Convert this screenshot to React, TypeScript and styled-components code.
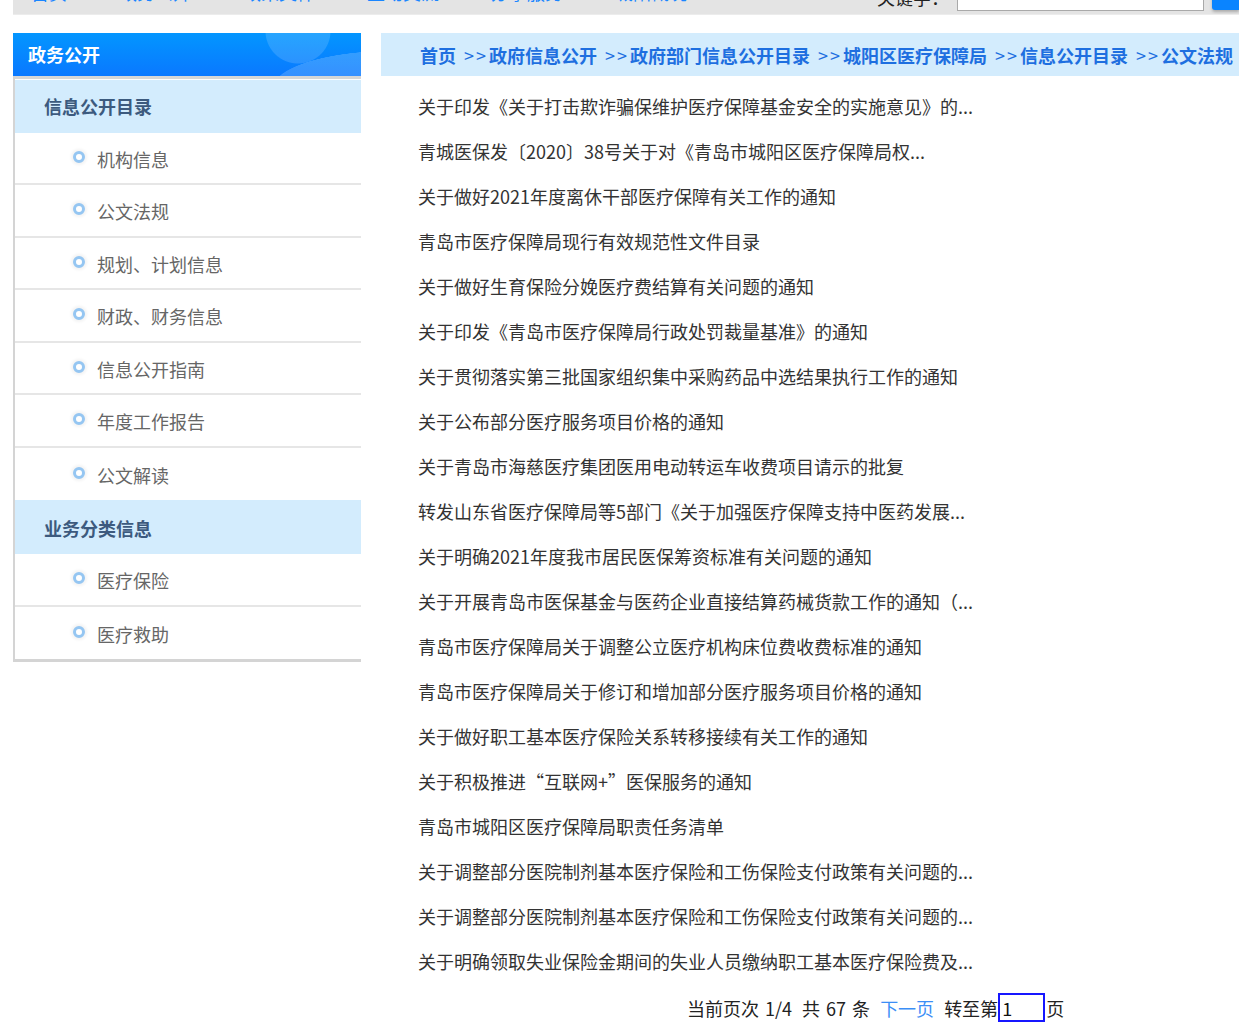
import styled, { createGlobalStyle } from "styled-components";

const GlobalStyle = createGlobalStyle`
  html, body {
    margin: 0;
    padding: 0;
    background: #fff;
  }
  body {
    font-family: "Noto Sans CJK SC", "Noto Sans", sans-serif;
    overflow: hidden;
  }
  * {
    box-sizing: border-box;
  }
`;

const topLinks = ["首页", "政务公开", "政策文件", "互动交流", "办事服务", "城阳概况"];

const menuGroups = [
  {
    title: "信息公开目录",
    items: [
      "机构信息",
      "公文法规",
      "规划、计划信息",
      "财政、财务信息",
      "信息公开指南",
      "年度工作报告",
      "公文解读",
    ],
  },
  {
    title: "业务分类信息",
    items: ["医疗保险", "医疗救助"],
  },
];

const crumbs = [
  "首页",
  "政府信息公开",
  "政府部门信息公开目录",
  "城阳区医疗保障局",
  "信息公开目录",
  "公文法规",
];

const articles = [
  "关于印发《关于打击欺诈骗保维护医疗保障基金安全的实施意见》的...",
  "青城医保发〔2020〕38号关于对《青岛市城阳区医疗保障局权...",
  "关于做好2021年度离休干部医疗保障有关工作的通知",
  "青岛市医疗保障局现行有效规范性文件目录",
  "关于做好生育保险分娩医疗费结算有关问题的通知",
  "关于印发《青岛市医疗保障局行政处罚裁量基准》的通知",
  "关于贯彻落实第三批国家组织集中采购药品中选结果执行工作的通知",
  "关于公布部分医疗服务项目价格的通知",
  "关于青岛市海慈医疗集团医用电动转运车收费项目请示的批复",
  "转发山东省医疗保障局等5部门《关于加强医疗保障支持中医药发展...",
  "关于明确2021年度我市居民医保筹资标准有关问题的通知",
  "关于开展青岛市医保基金与医药企业直接结算药械货款工作的通知（...",
  "青岛市医疗保障局关于调整公立医疗机构床位费收费标准的通知",
  "青岛市医疗保障局关于修订和增加部分医疗服务项目价格的通知",
  "关于做好职工基本医疗保险关系转移接续有关工作的通知",
  "关于积极推进“互联网+”医保服务的通知",
  "青岛市城阳区医疗保障局职责任务清单",
  "关于调整部分医院制剂基本医疗保险和工伤保险支付政策有关问题的...",
  "关于调整部分医院制剂基本医疗保险和工伤保险支付政策有关问题的...",
  "关于明确领取失业保险金期间的失业人员缴纳职工基本医疗保险费及...",
];

export default function App() {
  return (
    <>
      <GlobalStyle />
      <StyledTopBar>
        <StyledTopLinks>
          {topLinks.map((txt) => (
            <StyledTopLink key={txt}>{txt}</StyledTopLink>
          ))}
        </StyledTopLinks>
        <StyledSearch>
          <StyledSearchLabel>关键字：</StyledSearchLabel>
          <StyledSearchInput />
          <StyledSearchBtn />
        </StyledSearch>
      </StyledTopBar>

      <StyledMain>
        <StyledSide>
          <StyledSideTitle>政务公开</StyledSideTitle>
          <StyledMenuBox>
            {menuGroups.map((group, gi) => (
              <div key={group.title}>
                <StyledGroupTitle tall={gi > 0}>{group.title}</StyledGroupTitle>
                {group.items.map((item) => (
                  <StyledMenuItem key={item}>
                    <StyledDot />
                    <StyledMenuTxt>{item}</StyledMenuTxt>
                  </StyledMenuItem>
                ))}
              </div>
            ))}
          </StyledMenuBox>
        </StyledSide>

        <StyledContent>
          <StyledCrumbBar>
            {crumbs.map((c, i) => (
              <StyledCrumb key={c}>
                {i > 0 && <StyledCrumbSep>&gt;&gt;</StyledCrumbSep>}
                {c}
              </StyledCrumb>
            ))}
          </StyledCrumbBar>
          <StyledList>
            {articles.map((a, i) => (
              <StyledListItem key={i}>{a}</StyledListItem>
            ))}
          </StyledList>
          <StyledPager>
            <StyledPagerPart>当前页次 1/4</StyledPagerPart>
            <StyledPagerPart>共 67 条</StyledPagerPart>
            <StyledNextLink>下一页</StyledNextLink>
            <StyledGoto>
              转至第<StyledPageInput defaultValue="1" />页
            </StyledGoto>
          </StyledPager>
        </StyledContent>
      </StyledMain>
    </>
  );
}

const StyledTopBar = styled.header`
  margin-left: 13px;
  height: 15px;
  background: #e4e4e4;
  border-bottom: 1px solid #ececec;
  display: flex;
  align-items: flex-start;
  justify-content: space-between;
  overflow: hidden;
`;

const StyledTopLinks = styled.nav`
  display: flex;
  gap: 52px;
  padding-left: 18px;
  margin-top: -20px;
`;

const StyledTopLink = styled.span`
  font-size: 18px;
  line-height: 24px;
  color: #1a86ff;
`;

const StyledSearch = styled.div`
  display: flex;
  align-items: flex-end;
  margin-top: -20px;
`;

const StyledSearchLabel = styled.span`
  font-size: 18px;
  line-height: 28px;
  color: #222;
  margin-right: 8px;
`;

const StyledSearchInput = styled.div`
  width: 247px;
  height: 30px;
  background: #fff;
  border: 1px solid #a9a9a9;
`;

const StyledSearchBtn = styled.div`
  width: 27px;
  height: 30px;
  margin-left: 8px;
  margin-bottom: 1px;
  background: #0a84ff;
  border-radius: 3px 0 0 3px;
  box-shadow: 0 2px 3px rgba(0, 0, 0, 0.25);
`;

const StyledMain = styled.div`
  display: flex;
  gap: 20px;
  margin-top: 18px;
  padding-left: 13px;
`;

const StyledSide = styled.aside`
  width: 348px;
  flex-shrink: 0;
`;

const StyledSideTitle = styled.h2`
  margin: 0;
  height: 43px;
  padding-left: 15px;
  font-size: 18px;
  font-weight: 700;
  line-height: 43px;
  color: #fff;
  background:
    radial-gradient(circle at 285px -2px, rgba(255, 255, 255, 0.14) 0 32px, transparent 33px),
    radial-gradient(ellipse 120px 38px at 380px 56px, rgba(255, 255, 255, 0.18) 0 100%, transparent 101%),
    linear-gradient(180deg, #0396ff 0%, #0a78ff 100%);
`;

const StyledMenuBox = styled.div`
  border-top: 3px solid #d6d6d6;
  border-left: 2px solid #d4d4d4;
  border-bottom: 3px solid #d4d4d4;
  padding-top: 1px;
`;

const StyledGroupTitle = styled.h3<{ tall: boolean }>`
  margin: 0;
  height: ${({ tall }) => (tall ? "54.5px" : "52.5px")};
  padding-left: 29px;
  font-size: 18px;
  font-weight: 700;
  line-height: ${({ tall }) => (tall ? "56px" : "53px")};
  color: #3c5a7e;
  background: #d3ecfd;
`;

const StyledMenuItem = styled.div`
  display: flex;
  align-items: center;
  height: 52.5px;
  padding: 2px 0 0 58px;
  border-bottom: 2px solid #e6e6e6;
  &:last-child {
    border-bottom: none;
    height: 52px;
  }
`;

const StyledDot = styled.span`
  width: 12px;
  height: 12px;
  margin-top: -4px;
  border-radius: 50%;
  border: 3px solid #95c6f2;
  background: #fff;
  box-shadow: 0 0 3px 2px rgba(0, 0, 0, 0.05);
`;

const StyledMenuTxt = styled.span`
  margin-left: 12px;
  font-size: 18px;
  color: #666;
`;

const StyledContent = styled.main`
  flex: 1;
  min-width: 0;
`;

const StyledCrumbBar = styled.div`
  height: 43px;
  padding-left: 39px;
  display: flex;
  align-items: center;
  white-space: nowrap;
  background: #d3ecfd;
`;

const StyledCrumb = styled.span`
  font-size: 18px;
  font-weight: 700;
  color: #1e6fe0;
`;

const StyledCrumbSep = styled.span`
  margin: 0 1px 0 8px;
  font-weight: 400;
  letter-spacing: 2px;
`;

const StyledList = styled.ul`
  list-style: none;
  margin: 8px 0 0;
  padding: 0 0 0 37px;
`;

const StyledListItem = styled.li`
  height: 45px;
  line-height: 45px;
  font-size: 18px;
  color: #333;
  white-space: nowrap;
`;

const StyledPager = styled.div`
  display: flex;
  align-items: center;
  gap: 10px;
  margin-top: 9px;
  padding-left: 306px;
  font-size: 18px;
  color: #222;
  white-space: nowrap;
`;

const StyledPagerPart = styled.span`
  word-spacing: 2px;
`;

const StyledNextLink = styled.span`
  color: #3b8ef6;
`;

const StyledGoto = styled.span`
  display: flex;
  align-items: center;
`;

const StyledPageInput = styled.input`
  width: 47px;
  height: 29px;
  margin: 0 1px 0 0;
  padding: 0 2px;
  border: 2px solid #1616ff;
  font-family: inherit;
  font-size: 18px;
  color: #111;
  outline: none;
`;
